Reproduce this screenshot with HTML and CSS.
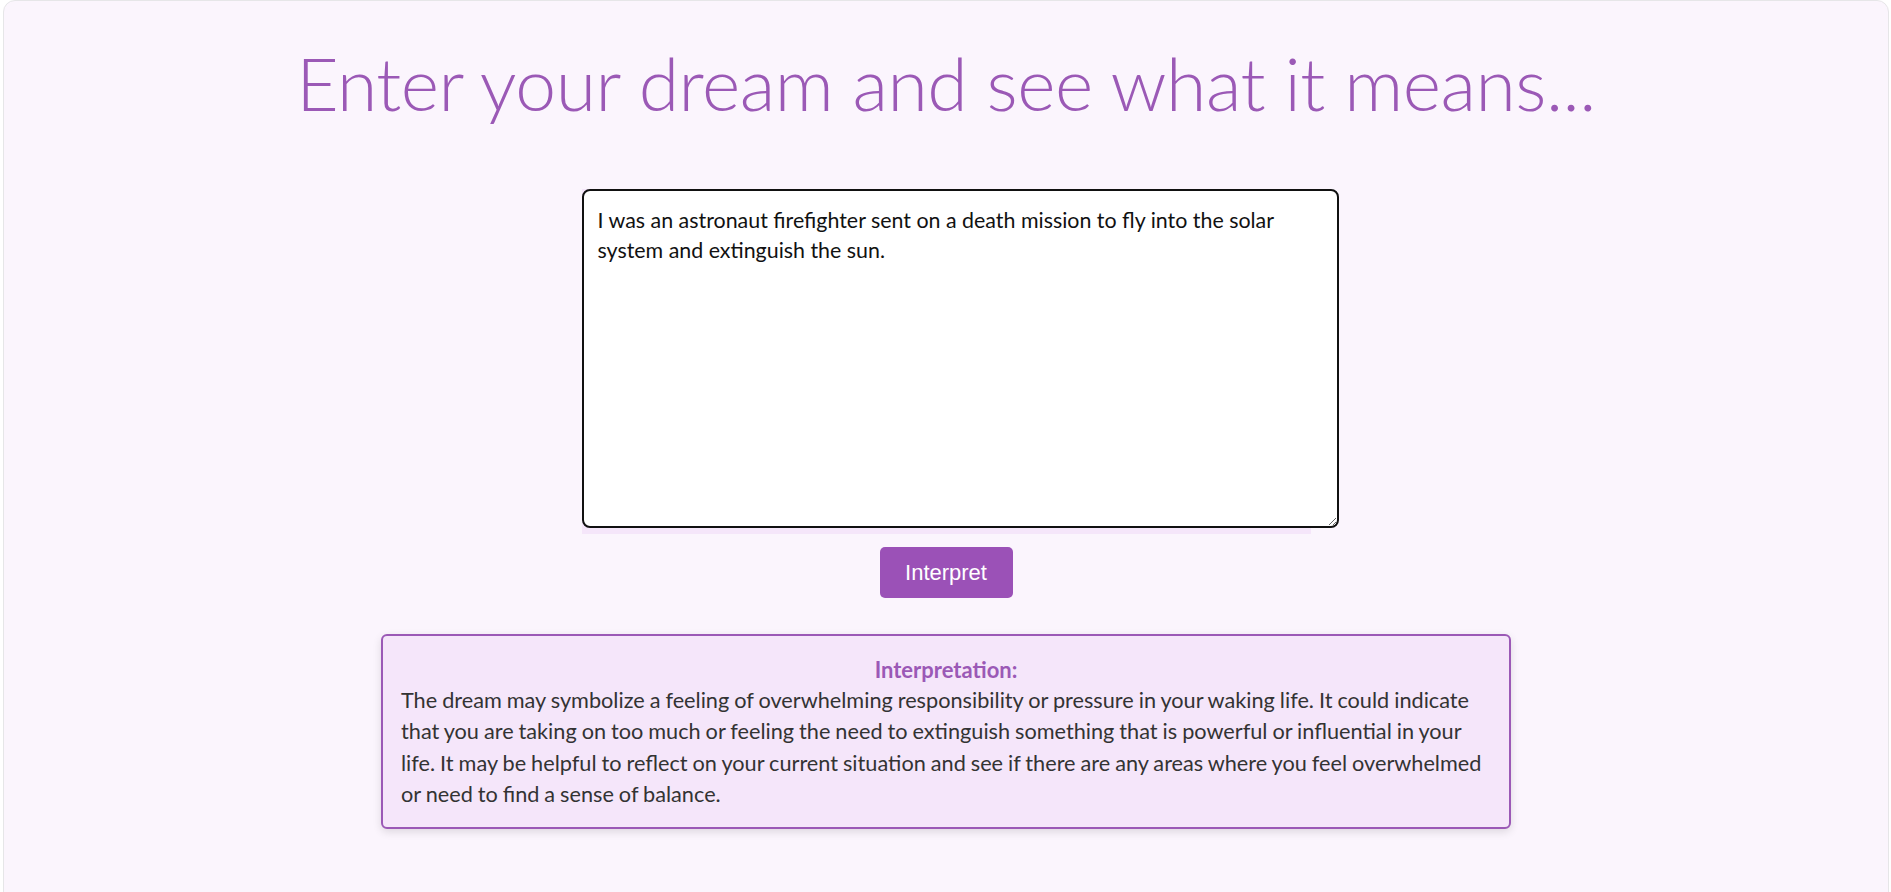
FILE: index.html
```html
<!DOCTYPE html>
<html lang="en">
<head>
<meta charset="utf-8">
<title>Dream Interpreter</title>
<link rel="stylesheet" href="styles.css">
</head>
<body>
<main class="card">
  <h1 class="title">Enter your dream and see what it means...</h1>
  <form class="dream-form">
    <div class="input-wrap">
      <textarea class="dream-input">I was an astronaut firefighter sent on a death mission to fly into the solar system and extinguish the sun.</textarea>
    </div>
    <button type="button" class="interpret-btn">Interpret</button>
  </form>
  <section class="result">
    <h2 class="result-title">Interpretation:</h2>
    <p class="result-text">The dream may symbolize a feeling of overwhelming responsibility or pressure in your waking life. It could indicate that you are taking on too much or feeling the need to extinguish something that is powerful or influential in your life. It may be helpful to reflect on your current situation and see if there are any areas where you feel overwhelmed or need to find a sense of balance.</p>
  </section>
</main>
</body>
</html>
```

FILE: styles.css
```css
html, body {
  margin: 0;
  padding: 0;
  background: #ffffff;
  height: 100%;
  overflow: hidden;
}

body {
  padding: 0 2px 0 3px;
  font-family: Lato, "Open Sans", sans-serif;
}

.card {
  box-sizing: border-box;
  min-height: 1000px;
  background: #fbf5fd;
  border: 1px solid #e6e6e8;
  border-radius: 12px;
  display: flex;
  flex-direction: column;
  align-items: center;
  padding-top: 34px;
}

.title {
  margin: 0;
  font-family: Lato, sans-serif;
  font-weight: 300;
  font-size: 73.3px;
  line-height: 96px;
  color: #9b59b6;
  letter-spacing: -0.5px;
}

.dream-form {
  margin-top: 58px;
  display: flex;
  flex-direction: column;
  align-items: center;
}

.input-wrap {
  width: 729px;
  background: #f5e6fa;
  padding-bottom: 6px;
  display: flex;
  justify-content: flex-start;
}

.dream-input {
  box-sizing: border-box;
  width: 757px;
  height: 339px;
  flex-shrink: 0;
  margin: 0;
  border: 2px solid #111;
  border-radius: 8px;
  padding: 14px;
  background: #fff;
  color: #111;
  font-family: Lato, sans-serif;
  font-size: 21.4px;
  line-height: 30px;
  resize: both;
  outline: none;
}

.interpret-btn {
  margin-top: 13px;
  height: 51px;
  width: 133px;
  border: none;
  border-radius: 5px;
  background: #9b51b7;
  color: #fff;
  font-family: "Liberation Sans", Arial, sans-serif;
  font-size: 22px;
  cursor: pointer;
}

.result {
  box-sizing: border-box;
  width: 1130px;
  margin-top: 36px;
  background: #f5e6fa;
  border: 2px solid #9b59b6;
  border-radius: 6px;
  padding: 18px 18px 17px;
  box-shadow: 0 3px 8px rgba(0, 0, 0, 0.12);
}

.result-title {
  margin: 0;
  text-align: center;
  font-family: Lato, sans-serif;
  font-size: 22px;
  font-weight: 700;
  line-height: 31px;
  color: #9b59b6;
}

.result-text {
  margin: 0;
  font-family: Lato, sans-serif;
  font-size: 21.7px;
  line-height: 31.3px;
  word-spacing: -0.6px;
  color: #333;
}
```
